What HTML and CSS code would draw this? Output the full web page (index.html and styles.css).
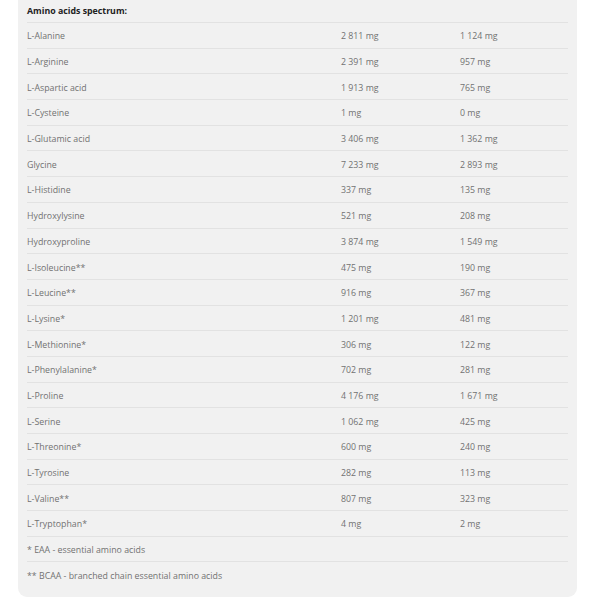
FILE: index.html
```html
<!DOCTYPE html>
<html lang="en">
<head>
<meta charset="utf-8">
<title>Amino acids spectrum</title>
<link rel="stylesheet" href="styles.css">
</head>
<body>
<div class="card">
  <table class="amino">
    <colgroup><col class="c-name"><col class="c-v1"><col class="c-v2"></colgroup>
    <tr class="head"><th colspan="3">Amino acids spectrum:</th></tr>
    <tr><td>L-Alanine</td><td>2 811 mg</td><td>1 124 mg</td></tr>
    <tr><td>L-Arginine</td><td>2 391 mg</td><td>957 mg</td></tr>
    <tr><td>L-Aspartic acid</td><td>1 913 mg</td><td>765 mg</td></tr>
    <tr><td>L-Cysteine</td><td>1 mg</td><td>0 mg</td></tr>
    <tr><td>L-Glutamic acid</td><td>3 406 mg</td><td>1 362 mg</td></tr>
    <tr><td>Glycine</td><td>7 233 mg</td><td>2 893 mg</td></tr>
    <tr><td>L-Histidine</td><td>337 mg</td><td>135 mg</td></tr>
    <tr><td>Hydroxylysine</td><td>521 mg</td><td>208 mg</td></tr>
    <tr><td>Hydroxyproline</td><td>3 874 mg</td><td>1 549 mg</td></tr>
    <tr><td>L-Isoleucine**</td><td>475 mg</td><td>190 mg</td></tr>
    <tr><td>L-Leucine**</td><td>916 mg</td><td>367 mg</td></tr>
    <tr><td>L-Lysine*</td><td>1 201 mg</td><td>481 mg</td></tr>
    <tr><td>L-Methionine*</td><td>306 mg</td><td>122 mg</td></tr>
    <tr><td>L-Phenylalanine*</td><td>702 mg</td><td>281 mg</td></tr>
    <tr><td>L-Proline</td><td>4 176 mg</td><td>1 671 mg</td></tr>
    <tr><td>L-Serine</td><td>1 062 mg</td><td>425 mg</td></tr>
    <tr><td>L-Threonine*</td><td>600 mg</td><td>240 mg</td></tr>
    <tr><td>L-Tyrosine</td><td>282 mg</td><td>113 mg</td></tr>
    <tr><td>L-Valine**</td><td>807 mg</td><td>323 mg</td></tr>
    <tr><td>L-Tryptophan*</td><td>4 mg</td><td>2 mg</td></tr>
    <tr><td colspan="3">* EAA - essential amino acids</td></tr>
    <tr><td colspan="3">** BCAA - branched chain essential amino acids</td></tr>
  </table>
</div>
</body>
</html>
```
FILE: styles.css
```css
html, body {
  margin: 0;
  padding: 0;
  background: #ffffff;
}
body {
  font-family: "Open Sans", "DejaVu Sans", sans-serif;
  font-size: 8.8px;
  color: #727272;
}
.card {
  margin: 0 23px 0 18px;
  padding: 0 9px 10px 9px;
  background: #f1f1f1;
  border-radius: 0 0 9px 9px;
}
.amino {
  width: 100%;
  border-collapse: collapse;
  table-layout: fixed;
}
.c-name { width: 314px; }
.c-v1 { width: 119px; }
.amino th {
  text-align: left;
  font-weight: 700;
  color: #222222;
  height: 21px;
  padding: 0 0 1px 0;
  vertical-align: middle;
  border-bottom: 1px solid #e2e2e2;
}
.amino td {
  height: 22.7px;
  padding: 2px 0 0 0;
  vertical-align: middle;
  border-bottom: 1px solid #e2e2e2;
}
.amino tr:last-child td {
  border-bottom: none;
}
```
